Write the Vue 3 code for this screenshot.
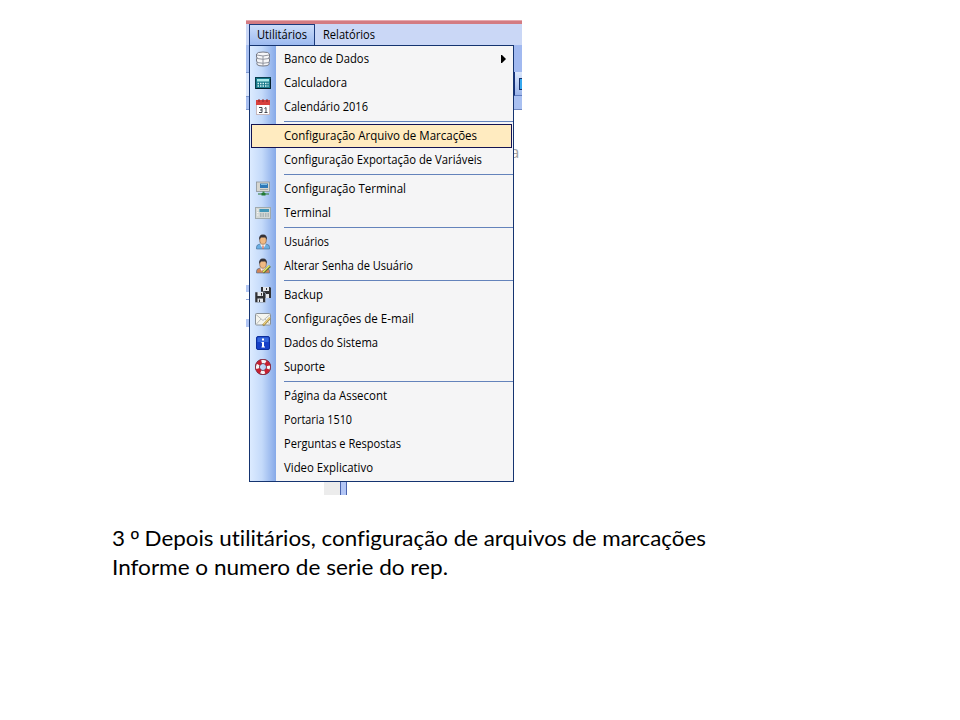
<script setup>
const groups = [
  [
    { t: 'Banco de Dados', w: 85, icon: 'db', arrow: true },
    { t: 'Calculadora', w: 63, icon: 'calc' },
    { t: 'Calendário 2016', w: 84, icon: 'cal' },
  ],
  [
    { t: 'Configuração Arquivo de Marcações', w: 193, active: true },
    { t: 'Configuração Exportação de Variáveis', w: 198 },
  ],
  [
    { t: 'Configuração Terminal', w: 122, icon: 'net' },
    { t: 'Terminal', w: 47, icon: 'term' },
  ],
  [
    { t: 'Usuários', w: 45, icon: 'user' },
    { t: 'Alterar Senha de Usuário', w: 129, icon: 'useredit' },
  ],
  [
    { t: 'Backup', w: 39, icon: 'disk' },
    { t: 'Configurações de E-mail', w: 130, icon: 'mail' },
    { t: 'Dados do Sistema', w: 94, icon: 'info' },
    { t: 'Suporte', w: 41, icon: 'ring' },
  ],
  [
    { t: 'Página da Assecont', w: 103 },
    { t: 'Portaria 1510', w: 68 },
    { t: 'Perguntas e Respostas', w: 117 },
    { t: 'Video Explicativo', w: 89 },
  ],
]
</script>

<template>
  <main class="slide">
    <section class="shot">
      <div class="redline"></div>
      <nav class="menubar">
        <div class="tab open"><svg class="label" width="54" height="18"><text x="0" y="13" textLength="50" lengthAdjust="spacingAndGlyphs">Utilitários</text></svg></div>
        <div class="tab"><svg class="label" width="56" height="18"><text x="0" y="13" textLength="52" lengthAdjust="spacingAndGlyphs">Relatórios</text></svg></div>
      </nav>
      <div class="body">
        <div class="edge left">
          <i class="l1"></i><i class="l2"></i><i class="l3"></i><i class="l4"></i><i class="l5"></i><i class="l6"></i><i class="l7"></i>
        </div>
        <div class="menu">
          <div v-for="(g, gi) in groups" :key="gi" class="group">
            <div v-for="m in g" :key="m.t" class="item" :class="{ active: m.active }">
              <span class="icon">
                <svg v-if="m.icon" width="16" height="16" viewBox="0 0 16 16">
                  <g v-if="m.icon === 'db'" stroke="#777b87" fill="#f6f6f8">
                    <path d="M1.500 3Q2 1 8 1T14.500 3V6Q14.500 7 13.500 7Q14.500 7 14.500 8V10.500Q14.500 11 13.500 11Q14.500 12 14 13.500Q13 15 8 15T2 13.500Q1.500 12 2.500 11Q1.500 11 1.500 10V8Q1.500 7 2.500 7Q1.500 7 1.500 6Z" />
                    <path d="M2 4Q8 6 14 4M2 7.500Q8 9 14 7.500M2 11.500Q8 13 14 11.500M8 5V15" fill="none" stroke="#9296a0" />
                  </g>
                  <g v-else-if="m.icon === 'calc'">
                    <rect x=".5" y="2.500" width="15" height="11" fill="#16788a" stroke="#0b3f4e" />
                    <rect x="2" y="4" width="12" height="2.500" fill="#a8e9e8" />
                    <path d="M2.500 8.500H13.500M2.500 11H13.500" stroke="#d9f5f5" stroke-width="1.300" stroke-dasharray="1.500 1" />
                    <path d="M1 13.500H15.500V4" fill="none" stroke="#04202c" />
                  </g>
                  <g v-else-if="m.icon === 'cal'">
                    <rect x="1.500" y="1.500" width="13" height="14" fill="#fff" stroke="#c8b8bc" />
                    <rect x="1" y="1" width="14" height="5" fill="#d8403c" />
                    <path d="M4 0V3M8 0V3M12 0V3" stroke="#8b2528" />
                    <path d="M4 8.500H7V13.500H4M5 11H7M9.500 9.500L11 8.500V13.500M9.500 13.500H12.500" fill="none" stroke="#454850" />
                  </g>
                  <g v-else-if="m.icon === 'net'">
                    <rect x="1.500" y="1" width="13" height="9.500" fill="#d6d6d0" stroke="#8d9599" stroke-width=".8" />
                    <rect x="5" y="2.500" width="8" height="4.500" fill="#2e79b8" />
                    <path d="M6 3.500H12" stroke="#7fc0e8" />
                    <path d="M5 8.500H13" stroke="#a4a9a7" />
                    <path d="M8.500 10.500V13" stroke="#3e8a4c" stroke-width="2" />
                    <path d="M3 13H14" stroke="#4c8b5c" stroke-width="1.300" />
                    <rect x="6.500" y="12" width="4" height="2.500" fill="#227a35" />
                  </g>
                  <g v-else-if="m.icon === 'term'">
                    <rect x=".5" y="2.500" width="15" height="11" fill="#d3d8d6" stroke="#a0aaad" />
                    <rect x="4.500" y="4" width="9.500" height="3" fill="#4196b8" />
                    <path d="M5 9H14M5 11H14" stroke="#8b989d" stroke-dasharray="1.500 1" />
                    <path d="M2 5H3.500M2 7.500H3.500M2 10H3.500" stroke="#f7f8f5" />
                  </g>
                  <g v-else-if="m.icon === 'user' || m.icon === 'useredit'">
                    <path d="M1.500 15V13Q1.500 10.500 5 10H11Q14.500 10.500 14.500 13V15Z" :fill="m.icon === 'user' ? '#69aee4' : '#d08458'" stroke="#456b92" stroke-width=".6" />
                    <path d="M5.500 9H10.500V11L8 15L5.500 11Z" fill="#faf6f0" />
                    <path d="M8 11.500V15" stroke="#c04a36" />
                    <ellipse cx="8" cy="6" rx="3.300" ry="4.300" fill="#f0b981" stroke="#735036" stroke-width=".6" />
                    <path d="M4.200 6Q3.500 .5 8 .5T11.800 6L10.500 3.500H6Z" fill="#353238" />
                    <path v-if="m.icon === 'useredit'" d="M8 14.500L15 8" stroke="#58733a" stroke-width="2.600" />
                    <path v-if="m.icon === 'useredit'" d="M8 14L14.500 7.500" stroke="#efe75c" stroke-width="1.500" />
                  </g>
                  <g v-else-if="m.icon === 'disk'">
                    <path d="M6 0H15L16 1V11H6Z" fill="#303134" />
                    <path d="M8 0H14V4H8ZM11 7H14V11H11Z" fill="#e4e7eb" />
                    <path d="M11 1H12V3H11Z" fill="#333" />
                    <path d="M0 5H9L10.500 6V15.500H0Z" fill="#303134" stroke="#cbdaf0" stroke-width=".5" />
                    <path d="M2.500 5H8V9H2.500ZM2.500 11.500H8V15H2.500Z" fill="#e4e7eb" />
                    <path d="M6 6H7V8.500H6ZM4 12.500H5V15H4Z" fill="#333" />
                  </g>
                  <g v-else-if="m.icon === 'mail'">
                    <rect x=".5" y="2.500" width="15" height="11.500" rx="1" fill="#f5f5ef" stroke="#8a9299" />
                    <path d="M1 3.500L8 9.500L15 3.500M1 13.500L6 8M15 13.500L10 8" fill="none" stroke="#b9bdbc" />
                    <path d="M8 14.500L15 7" stroke="#9b8444" stroke-width="2.400" />
                    <path d="M8.500 13.500L15 6.500" stroke="#ebcf7d" stroke-width="1.200" />
                  </g>
                  <g v-else-if="m.icon === 'info'">
                    <rect x="1.500" y="1.500" width="13" height="13" rx="1.500" fill="#1640c8" stroke="#0c2e9c" />
                    <path d="M2.500 7V3Q2.500 2.500 3 2.500H13Q13.500 2.500 13.500 3V7" fill="#3566dc" />
                    <path d="M7 3.500H9V5.500H7ZM6.500 7H9V11.500H10V12.500H6.500V11.500H7V8H6.500Z" fill="#fff" />
                  </g>
                  <g v-else fill="none">
                    <circle cx="8" cy="8" r="5.500" stroke="#4a2038" stroke-width="5" />
                    <circle cx="8" cy="8" r="5.500" stroke="#f8f5f5" stroke-width="3.400" />
                    <circle cx="8" cy="8" r="5.500" stroke="#c91f30" stroke-width="4.200" stroke-dasharray="4.320 4.320" stroke-dashoffset="-2.160" />
                    <circle cx="8" cy="8" r="7.600" stroke="#a3283c" stroke-width=".7" />
                  </g>
                </svg>
              </span>
              <svg class="label" :width="m.w + 4" height="18"><text x="0" y="13" :textLength="m.w" lengthAdjust="spacingAndGlyphs">{{ m.t }}</text></svg>
              <svg v-if="m.arrow" class="arrow" width="5" height="8"><path d="M0 0H1L5 4L1 8H0Z" /></svg>
            </div>
          </div>
        </div>
        <div class="edge right">
          <i class="r1"></i><i class="r2"><b></b></i><i class="r3"></i><i class="r4"></i>
          <svg class="stray" width="8" height="22"><text x="-4" y="16">a</text></svg>
        </div>
      </div>
      <div class="foot"><i class="grey"></i><i class="blue"></i></div>
    </section>
    <section class="caption">
      <svg width="604" height="29"><text x="0" y="21" textLength="594" lengthAdjust="spacingAndGlyphs">3 <tspan class="ord">º</tspan> Depois utilitários, configuração de arquivos de marcações</text></svg>
      <svg width="604" height="29"><text x="0" y="21" textLength="336" lengthAdjust="spacingAndGlyphs">Informe o numero de serie do rep.</text></svg>
    </section>
  </main>
</template>

<style>
body { margin: 0; background: #fff; }
</style>

<style scoped>
* { box-sizing: border-box; }
.slide { width: 960px; height: 720px; padding-top: 20px; background: #fff; overflow: hidden; }
svg { display: block; flex: none; }
i, b { display: block; flex: none; }
.shot { width: 276px; margin-left: 246px; height: 475px; }
.redline { height: 4px; background: #d37b82; border-top: 1px solid #e6a9ae; }
.menubar { height: 21px; padding-left: 3px; display: flex; background: #cad7f6; }
.tab { padding: 2px 0 0 8px; height: 21px; }
.tab.open { width: 66px; padding: 1px 0 0 7px; border: 1px solid #1c3a7c; border-bottom: 0; background: linear-gradient(#cbdcf9, #9dbaf0); }
.label { overflow: visible; }
.label text { font: 12px "Open Sans", "Noto Sans", sans-serif; fill: #000; }
.body { display: flex; height: 437px; }
.edge { height: 437px; display: flex; flex-direction: column; }
.left { width: 3px; }
.l1 { height: 27px; background: #a9c0f1; }
.l2 { height: 24px; background: #dbe6fb; border-top: 1px solid #7d98d0; }
.l3 { height: 14px; background: #a9c0f1; border-top: 1px solid #7d98d0; border-bottom: 1px solid #7d98d0; }
.l4 { height: 175px; }
.l5 { height: 15px; border-top: 7px solid #b3c7f4; border-bottom: 1px solid #8fa5d8; }
.l6 { height: 19px; }
.l7 { height: 8px; background: #b3c7f4; }
.right { width: 8px; }
.r1 { height: 27px; background: #a1b9f0; }
.r2 { height: 24px; padding: 6px 0 0 4px; background: linear-gradient(#dbe7fc, #9bb4ea); border-left: 1px solid #14307a; border-bottom: 1px solid #5f7cc0; }
.r2 b { height: 12px; border: 1px solid #14306c; border-right: 0; background: #35a7ee; }
.r3 { height: 14px; background: #a9c0f1; border-bottom: 1px solid #7088c0; }
.r4 { height: 32px; }
.stray text { font: 17px "Open Sans", sans-serif; fill: #a4a4a4; }
.menu { width: 265px; border: 1px solid #153470; padding: 1px 0; background: linear-gradient(90deg, #dcebff 0, #c4dafa 12px, #86a9e8 26px, #f5f5f6 26px); }
.group + .group { padding-top: 5px; background: linear-gradient(#6483bb, #6483bb) 34px 2px / 229px 1px no-repeat; }
.item { height: 24px; display: flex; align-items: center; }
.item.active { margin: 0 1px; border: 1px solid #141452; background: #ffebc0; }
.item.active .icon { width: 32px; }
.icon { width: 34px; padding-left: 5px; flex: none; }
.arrow { margin-left: auto; margin-right: 7px; }
.foot { height: 13px; display: flex; padding-left: 78px; }
.grey { width: 16px; background: #ececec; }
.blue { width: 7px; background: #b3c6f5; border: solid #4b64ae; border-width: 0 1px; }
.caption { margin: 30px 0 0 112px; }
.caption text { font: 22px Lato, "Open Sans", sans-serif; font-variant-ligatures: none; fill: #000; }
.caption .ord { font-family: "Liberation Sans", sans-serif; }
</style>
